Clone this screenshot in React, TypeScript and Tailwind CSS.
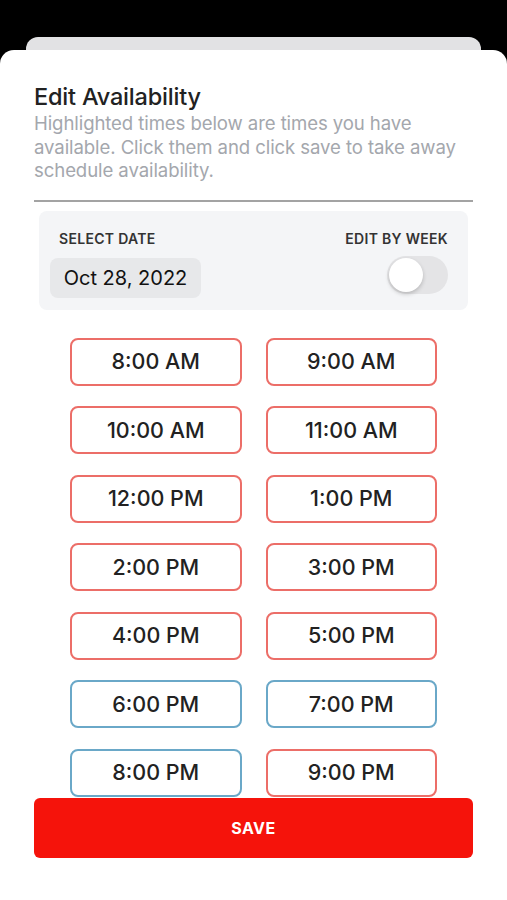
import React from "react";

const slots: Array<{ label: string; booked: boolean }> = [
  { label: "8:00 AM", booked: false },
  { label: "9:00 AM", booked: false },
  { label: "10:00 AM", booked: false },
  { label: "11:00 AM", booked: false },
  { label: "12:00 PM", booked: false },
  { label: "1:00 PM", booked: false },
  { label: "2:00 PM", booked: false },
  { label: "3:00 PM", booked: false },
  { label: "4:00 PM", booked: false },
  { label: "5:00 PM", booked: false },
  { label: "6:00 PM", booked: true },
  { label: "7:00 PM", booked: true },
  { label: "8:00 PM", booked: true },
  { label: "9:00 PM", booked: false },
];

export default function App() {
  const [byWeek, setByWeek] = React.useState(false);

  return (
    <div
      className="relative h-[900px] w-[507px] overflow-hidden bg-black"
      style={{ fontFamily: "Inter, 'Noto Sans', sans-serif" }}
    >
      <div className="mx-[26px] mt-[37px] h-[30px] rounded-t-[12px] bg-[#e2e2e4]" />
      <div className="absolute inset-x-0 top-[50px] bottom-0 rounded-t-[14px] bg-white">
        <div className="flex flex-col px-[34px] pt-[83px] -mt-[50px]">
          <h1 className="text-[23.5px] leading-[28px] font-medium tracking-[-0.2px] text-[#222]">Edit Availability</h1>
          <p className="mt-[1px] text-[18.6px] leading-[23.5px] tracking-[-0.1px] text-[#a4a7ad]">
            Highlighted times below are times you have available. Click them and click save to take away
            schedule availability.
          </p>
          <div className="mt-[17px] h-[2px] bg-[#a3a3a3]" />

          <div className="mx-[5px] mt-[9px] flex h-[99px] items-start justify-between rounded-[8px] bg-[#f4f5f7] px-[11px] pt-[20px]">
            <div className="flex flex-col">
              <span className="ml-[9px] text-[14px] leading-[16px] font-semibold tracking-[0.3px] text-[#333]">
                SELECT DATE
              </span>
              <div className="mt-[11px] flex h-[40px] w-[151px] items-center justify-center rounded-[8px] bg-[#e7e8ea] text-[20px] text-[#111]">
                Oct 28, 2022
              </div>
            </div>
            <div className="flex flex-col items-end">
              <span className="mr-[9px] text-[14px] leading-[16px] font-semibold tracking-[0.3px] text-[#333]">
                EDIT BY WEEK
              </span>
              <button
                onClick={() => setByWeek(!byWeek)}
                className="mt-[9px] mr-[9px] flex h-[38px] w-[61px] items-center rounded-full bg-[#e4e4e6] px-[2px]"
              >
                <span className="h-[34px] w-[34px] rounded-full bg-white shadow-[0_2px_4px_rgba(0,0,0,0.2)]" />
              </button>
            </div>
          </div>

          <div className="h-[488px] overflow-hidden pt-[28px]">
            <div className="mx-auto grid w-[367px] grid-cols-2 gap-x-[24px] gap-y-[20.5px]">
              {slots.map((s) => (
                <div
                  key={s.label}
                  className={
                    "flex h-[48px] items-center justify-center rounded-[8px] border-2 bg-white text-[21.5px] font-medium text-[#222] " +
                    (s.booked ? "border-[#6aa8c8]" : "border-[#ec6e68]")
                  }
                >
                  {s.label}
                </div>
              ))}
            </div>
          </div>

          <button className="h-[60px] rounded-[6px] bg-[#f5130b] text-[16px] font-bold tracking-[0.5px] text-white">
            SAVE
          </button>
        </div>
      </div>
    </div>
  );
}
